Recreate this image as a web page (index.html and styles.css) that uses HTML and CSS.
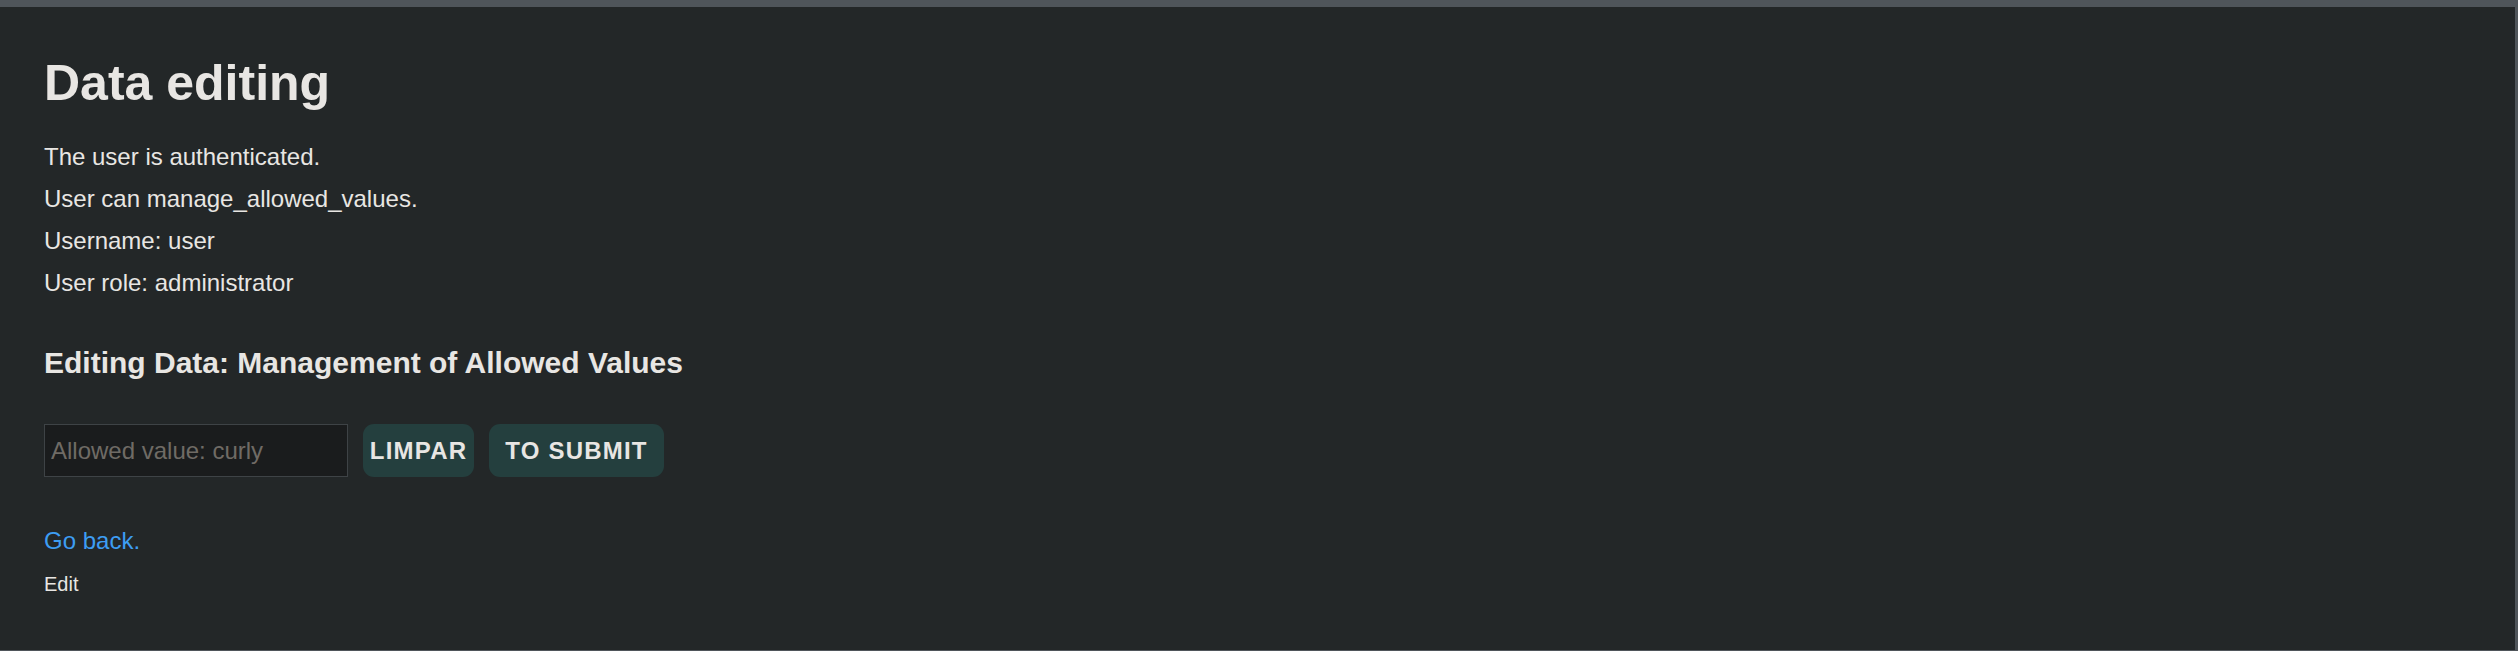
FILE: index.html
```html
<!DOCTYPE html>
<html lang="en">
<head>
<meta charset="utf-8">
<title>Data editing</title>
<link rel="stylesheet" href="styles.css">
</head>
<body>
<div class="frame">
  <main class="page">
    <h1 class="title">Data editing</h1>
    <div class="info">
      <p class="line">The user is authenticated.</p>
      <p class="line">User can manage_allowed_values.</p>
      <p class="line">Username: user</p>
      <p class="line">User role: administrator</p>
    </div>
    <h3 class="subtitle">Editing Data: Management of Allowed Values</h3>
    <form class="form-row">
      <input class="field" type="text" placeholder="Allowed value: curly">
      <button class="btn btn-clear" type="reset">Limpar</button>
      <button class="btn btn-submit" type="submit">To submit</button>
    </form>
    <a class="back" href="#">Go back.</a>
    <div class="crumb">Edit</div>
  </main>
</div>
</body>
</html>
```

FILE: styles.css
```css
html, body {
  margin: 0;
  padding: 0;
  height: 100%;
}
body {
  background: #232728;
  font-family: "Liberation Sans", Arial, sans-serif;
  color: #e8e6e3;
}
.frame {
  box-sizing: border-box;
  height: 651px;
  border-top: 7px solid #4f555a;
  border-right: 3px solid #4f555a;
  border-bottom: 1px solid #4f555a;
  background: #232728;
}
.page {
  padding: 47px 0 0 44px;
  display: flex;
  flex-direction: column;
  align-items: flex-start;
}
.title {
  margin: 0;
  font-size: 50px;
  line-height: 58px;
  font-weight: bold;
}
.info {
  margin-top: 24px;
}
.line {
  margin: 0;
  font-size: 24px;
  line-height: 42px;
}
.subtitle {
  margin: 42px 0 0;
  font-size: 30px;
  line-height: 34px;
  font-weight: bold;
}
.form-row {
  margin-top: 44px;
  display: flex;
  gap: 15px;
  height: 53px;
}
.field {
  box-sizing: border-box;
  width: 304px;
  height: 53px;
  margin: 0;
  padding: 0 6px;
  background: #1a1c1d;
  border: 1px solid #3e4346;
  color: #e8e6e3;
  font-family: "Liberation Sans", Arial, sans-serif;
  font-size: 24px;
  outline: none;
}
.field::placeholder {
  color: #6f6b65;
}
.btn {
  box-sizing: border-box;
  height: 53px;
  margin: 0;
  border: none;
  border-radius: 11px;
  background: #243f3e;
  color: #e8e6e3;
  font-family: "Liberation Sans", Arial, sans-serif;
  font-size: 24px;
  font-weight: bold;
  text-transform: uppercase;
  letter-spacing: 1.2px;
  cursor: pointer;
}
.btn-clear {
  width: 111px;
  padding: 0;
}
.btn-submit {
  width: 175px;
  padding: 0;
}
.back {
  margin-top: 43px;
  font-size: 24px;
  line-height: 42px;
  color: #3d9df3;
  text-decoration: none;
}
.crumb {
  margin-top: 7px;
  font-size: 20px;
  line-height: 30px;
}
```
